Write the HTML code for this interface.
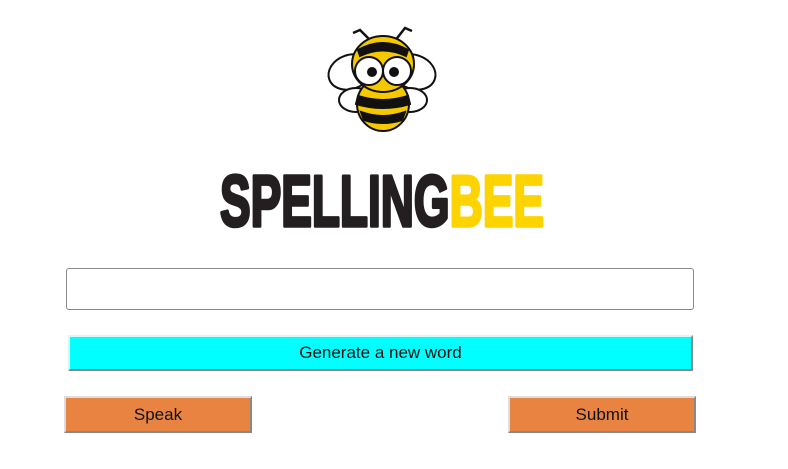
<!DOCTYPE html>
<html><head><style>
body{margin:0;width:788px;height:469px;background:#fff;position:relative;overflow:hidden;font-family:"Liberation Sans",sans-serif}
.b{position:absolute;box-sizing:border-box;font-size:17px;color:#111;display:flex;align-items:center;justify-content:center}
</style></head><body>
<svg style="position:absolute;left:320px;top:18px" width="125" height="118" viewBox="320 18 125 118">
<g stroke="#111" stroke-width="2" fill="#fff">
<path d="M372 42 L360 30 L353 33" fill="none" stroke-width="2.5"/>
<path d="M394 42 L405 28 L412 31" fill="none" stroke-width="2.5"/>
<ellipse cx="350" cy="72" rx="22" ry="17" transform="rotate(-20 350 72)"/>
<ellipse cx="414" cy="72" rx="22" ry="17" transform="rotate(20 414 72)"/>
<ellipse cx="356" cy="100" rx="17" ry="12"/>
<ellipse cx="410" cy="100" rx="17" ry="12"/>
<ellipse cx="383" cy="104" rx="26" ry="27" fill="#f6c800"/>
<path d="M358 96 Q383 104 408 96 L410 104 Q383 112 356 104Z" fill="#111"/>
<path d="M361 112 Q383 120 405 112 L402 120 Q383 126 364 120Z" fill="#111"/>
<ellipse cx="383" cy="64" rx="31" ry="28" fill="#f6c800"/>
<path d="M358 50 Q383 36 408 50 L406 56 Q383 45 360 56Z" fill="#111"/>
<ellipse cx="369" cy="71" rx="14" ry="14"/>
<ellipse cx="397" cy="71" rx="14" ry="14"/>
</g>
<circle cx="372" cy="72" r="5" fill="#111"/><circle cx="394" cy="72" r="5" fill="#111"/>
</svg>
<svg style="position:absolute;left:0;top:0" width="788" height="240">
<text x="220" y="226" textLength="324" lengthAdjust="spacingAndGlyphs" font-family="Liberation Sans" font-weight="bold" font-size="72" fill="#231f20" stroke="#231f20" stroke-width="3.5" stroke-linejoin="round">SPELLING<tspan fill="#fdd300" stroke="#fdd300">BEE</tspan></text>
</svg>
<div class="b" style="left:66px;top:268px;width:628px;height:42px;border:1px solid #8a8a8a;border-radius:3px"></div>
<div class="b" style="left:68px;top:335px;width:625px;height:36px;background:#00ffff;border:2px solid;border-color:#d8f8f8 #888 #888 #d8f8f8">Generate a new word</div>
<div class="b" style="left:64px;top:396px;width:188px;height:37px;background:#e88342;border:2px solid;border-color:#ddd #888 #888 #ddd">Speak</div>
<div class="b" style="left:508px;top:396px;width:188px;height:37px;background:#e88342;border:2px solid;border-color:#ddd #888 #888 #ddd">Submit</div>
</body></html>
